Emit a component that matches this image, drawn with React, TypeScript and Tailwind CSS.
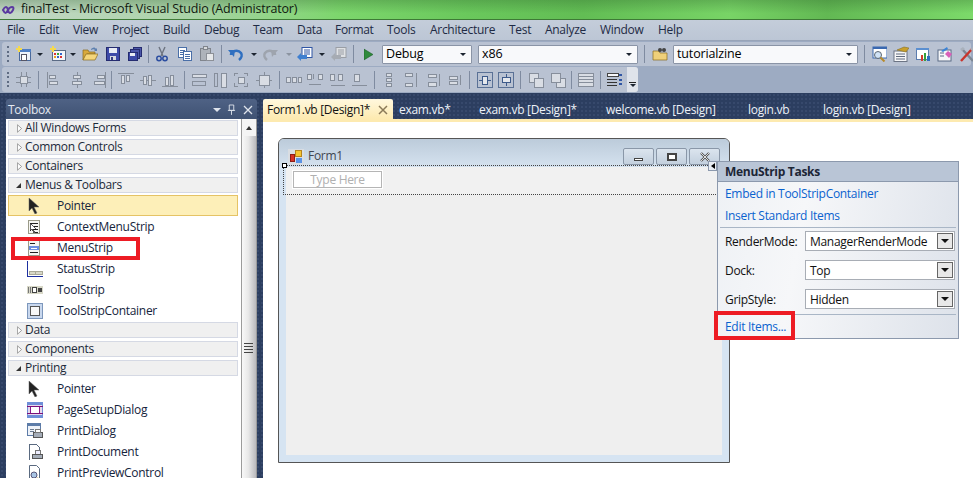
import type { ReactNode } from "react";

const menuItems = [
  { label: "File", width: "w-[32px]" },
  { label: "Edit", width: "w-[34px]" },
  { label: "View", width: "w-[39px]" },
  { label: "Project", width: "w-[51px]" },
  { label: "Build", width: "w-[41px]" },
  { label: "Debug", width: "w-[49px]" },
  { label: "Team", width: "w-[44px]" },
  { label: "Data", width: "w-[38px]" },
  { label: "Format", width: "w-[52px]" },
  { label: "Tools", width: "w-[43px]" },
  { label: "Architecture", width: "w-[79px]" },
  { label: "Test", width: "w-[36px]" },
  { label: "Analyze", width: "w-[55px]" },
  { label: "Window", width: "w-[58px]" },
  { label: "Help", width: "w-[40px]" },
];

const Svg = ({ children, className = "" }: { children: ReactNode; className?: string }) => (
  <svg viewBox="0 0 16 16" className={`h-4 w-4 shrink-0 ${className}`} shapeRendering="crispEdges">
    {children}
  </svg>
);

const Grip = () => (
  <div className="ml-[5px] flex h-[16px] w-[3px] shrink-0 flex-col justify-between">
    <span className="h-[2px] w-[2px] bg-[#5f6c82]" />
    <span className="h-[2px] w-[2px] bg-[#5f6c82]" />
    <span className="h-[2px] w-[2px] bg-[#5f6c82]" />
    <span className="h-[2px] w-[2px] bg-[#5f6c82]" />
  </div>
);

const Sep = ({ className = "" }: { className?: string }) => (
  <div className={`h-[18px] w-px shrink-0 bg-[#7f8ba0] ${className}`} />
);

const Caret = ({ className = "", gray = false }: { className?: string; gray?: boolean }) => (
  <span
    className={`h-0 w-0 shrink-0 border-x-[3px] border-t-[3px] border-x-transparent ${gray ? "border-t-[#8b93a0]" : "border-t-[#1c2430]"} ${className}`}
  />
);

const NewProject = ({ className = "" }: { className?: string }) => (
  <Svg className={className}>
    <rect x="3.500" y="3.500" width="11" height="11" fill="#eef3fb" stroke="#4a6a9c" />
    <rect x="3" y="3" width="12" height="3" fill="#4f7fc4" />
    <rect x="5.500" y="8.500" width="5" height="6" fill="#fff" stroke="#556" />
    <path d="M0 2h2V0h2v2h2v2H4v2H2V4H0z" fill="#f5d94e" />
  </Svg>
);

const AddItem = ({ className = "" }: { className?: string }) => (
  <Svg className={className}>
    <rect x="2.500" y="4.500" width="13" height="10" fill="#f4f6f9" stroke="#5b6b85" />
    <rect x="4" y="7" width="2" height="2" fill="#d33" />
    <rect x="7" y="7" width="2" height="2" fill="#3a3" />
    <rect x="10" y="7" width="2" height="2" fill="#36c" />
    <rect x="4" y="10" width="2" height="2" fill="#e9a21f" />
    <rect x="7" y="10" width="2" height="2" fill="#36c" />
    <rect x="10" y="10" width="2" height="2" fill="#d33" />
    <path d="M0 2h2V0h2v2h2v2H4v2H2V4H0z" fill="#f5d94e" />
  </Svg>
);

const OpenFolder = ({ className = "" }: { className?: string }) => (
  <svg viewBox="0 0 16 16" className={`h-4 w-4 shrink-0 ${className}`}>
    <path d="M1 14V4h5l1 2h6v2H5L1 14z" fill="#d8a93c" stroke="#8a6a1e" strokeWidth=".7" />
    <path d="M1 14l3-6h12l-3 6z" fill="#f5d67a" stroke="#8a6a1e" strokeWidth=".7" />
    <path d="M9 3c2-2 4-2 5 0l1-1v3h-3l1-1C12 3 11 3 9 4z" fill="#5c7fae" />
  </svg>
);

const Save = ({ className = "" }: { className?: string }) => (
  <Svg className={className}>
    <rect x="1.500" y="1.500" width="13" height="13" fill="#3d4aa8" stroke="#252c70" />
    <rect x="4" y="2" width="8" height="5" fill="#e8ecf4" />
    <rect x="5" y="10" width="6" height="4" fill="#d5d8e0" />
    <rect x="6" y="11" width="2" height="3" fill="#353c80" />
  </Svg>
);

const SaveAll = ({ className = "" }: { className?: string }) => (
  <Svg className={className}>
    <rect x="6.500" y="1.500" width="8" height="9" fill="#4a55a8" stroke="#252c70" />
    <rect x="3.500" y="3.500" width="9" height="9" fill="#4a55a8" stroke="#252c70" />
    <rect x="1.500" y="6.500" width="9" height="8" fill="#3d4aa8" stroke="#252c70" />
    <rect x="3" y="7" width="5" height="3" fill="#e8ecf4" />
  </Svg>
);

const Cut = ({ className = "" }: { className?: string }) => (
  <svg viewBox="0 0 16 16" className={`h-4 w-4 shrink-0 ${className}`}>
    <path d="M5 1l4 9M11 1L7 10" stroke="#6d7480" strokeWidth="1.400" fill="none" />
    <circle cx="5" cy="12.500" r="2.200" fill="none" stroke="#2b4da0" strokeWidth="1.500" />
    <circle cx="11" cy="12.500" r="2.200" fill="none" stroke="#2b4da0" strokeWidth="1.500" />
  </svg>
);

const Copy = ({ className = "" }: { className?: string }) => (
  <Svg className={className}>
    <rect x="1.500" y="1.500" width="8" height="10" fill="#fff" stroke="#4a6fa8" />
    <path d="M3 4h5M3 6h5M3 8h5" stroke="#4a6fa8" />
    <rect x="6.500" y="5.500" width="8" height="9" fill="#fff" stroke="#4a6fa8" />
    <path d="M8 8h5M8 10h5M8 12h5" stroke="#4a6fa8" />
  </Svg>
);

const Paste = ({ className = "" }: { className?: string }) => (
  <Svg className={className}>
    <rect x="1.500" y="2.500" width="10" height="12" fill="#aeb3ba" stroke="#80858d" />
    <rect x="4.500" y="0.500" width="4" height="3" fill="#d7d9dc" stroke="#80858d" />
    <rect x="7.500" y="7.500" width="7" height="7" fill="#e6e8ea" stroke="#8c9097" />
  </Svg>
);

const Undo = ({ className = "", gray = false, flip = false }: { className?: string; gray?: boolean; flip?: boolean }) => (
  <svg viewBox="0 0 16 16" className={`h-4 w-4 shrink-0 ${flip ? "-scale-x-100" : ""} ${className}`}>
    <path
      d="M3 9c0-4 7-6 10-2 1.500 2 .5 5-2 7"
      fill="none"
      stroke={gray ? "#9ea4ae" : "#2f6fc0"}
      strokeWidth="2.600"
    />
    <path d="M0 4l7 0-1 7z" fill={gray ? "#9ea4ae" : "#2f6fc0"} />
  </svg>
);

const Navigate = ({ className = "", gray = false }: { className?: string; gray?: boolean }) => (
  <svg viewBox="0 0 16 16" className={`h-4 w-4 shrink-0 ${className}`}>
    <rect x="5" y="1.500" width="10" height="10" fill={gray ? "#dfe1e4" : "#fff"} stroke={gray ? "#9a9ea5" : "#2f55a4"} />
    <path d="M7 4h6M7 6h6M7 8h6" stroke={gray ? "#9a9ea5" : "#2f55a4"} />
    <path d="M0 11l4-4v2h6v4H4v2z" fill={gray ? "#a6abb3" : "#3f7fd0"} />
  </svg>
);

const Play = ({ className = "" }: { className?: string }) => (
  <svg viewBox="0 0 10 12" className={`h-[13px] w-[9px] shrink-0 ${className}`}>
    <path d="M0 0l10 6-10 6z" fill="#2f8a3c" stroke="#1c5c28" strokeWidth=".6" />
  </svg>
);

const FindFolder = ({ className = "" }: { className?: string }) => (
  <svg viewBox="0 0 16 16" className={`h-4 w-4 shrink-0 ${className}`}>
    <path d="M1 14V5h6l1 2h7v7z" fill="#efd07a" stroke="#8a6a1e" strokeWidth=".7" />
    <circle cx="8" cy="4" r="2" fill="#444" />
    <circle cx="12" cy="4" r="2" fill="#444" />
  </svg>
);

const SolutionExplorer = ({ className = "" }: { className?: string }) => (
  <svg viewBox="0 0 16 16" className={`h-4 w-4 shrink-0 ${className}`}>
    <rect x="2" y="1" width="14" height="11" fill="#fff" stroke="#3a68b0" />
    <rect x="2" y="1" width="14" height="2" fill="#3a68b0" />
    <circle cx="7" cy="9" r="3.500" fill="#cfe2f6" stroke="#5d6873" />
    <path d="M9.500 11.500l4 4" stroke="#b88a2a" strokeWidth="2" />
  </svg>
);

const PropertiesIcon = ({ className = "" }: { className?: string }) => (
  <svg viewBox="0 0 16 16" className={`h-4 w-4 shrink-0 ${className}`}>
    <rect x="1" y="5" width="13" height="10.500" fill="#f5f6f8" stroke="#6c7484" />
    <path d="M3 8h9M3 10.500h9M3 13h9" stroke="#606a7c" />
    <path d="M4 4l7-3 5 1-3 4z" fill="#c9a02c" stroke="#7d6416" strokeWidth=".5" />
  </svg>
);

const ObjectBrowser = ({ className = "" }: { className?: string }) => (
  <Svg className={className}>
    <rect x="1.500" y="2.500" width="12" height="11" fill="#fff" stroke="#5b7cae" />
    <rect x="1" y="2" width="13" height="2" fill="#5b8fd0" />
    <rect x="6" y="9" width="2" height="6" fill="#d43b2c" />
    <rect x="9" y="7" width="2" height="8" fill="#37a03c" />
    <rect x="12" y="10" width="3" height="5" fill="#2f6fc0" />
  </Svg>
);

const Toolbox16 = ({ className = "" }: { className?: string }) => (
  <svg viewBox="0 0 16 16" className={`h-4 w-4 shrink-0 ${className}`}>
    <rect x="1" y="4" width="13" height="11" fill="#f5f6f8" stroke="#5b6b85" />
    <path d="M3 7h4M3 10h4" stroke="#5b6b85" />
    <path d="M8 8l3-3 4 3-3 4z" fill="#d85fb8" />
    <path d="M4 5l6-4 1 2-5 3z" fill="#3b83d6" />
  </svg>
);

const Tools = ({ className = "" }: { className?: string }) => (
  <svg viewBox="0 0 16 16" className={`h-4 w-4 shrink-0 ${className}`}>
    <path d="M14 15L3 3" stroke="#7d8794" strokeWidth="2.400" />
    <path d="M2 15L13 3" stroke="#c9342c" strokeWidth="2.400" />
    <path d="M1 3l3-2 2 2-3 2zM11 3l3-2 2 3-3 1z" fill="#a9b1bc" />
  </svg>
);

// gray layout glyph: a couple of boxes on a guide line, used all over the layout toolbar
const Layout = ({
  boxes,
  lines,
  className = "",
  stroke = "#868e9b",
}: {
  boxes: [number, number, number, number][];
  lines?: string;
  className?: string;
  stroke?: string;
}) => (
  <Svg className={className}>
    {lines && <path d={lines} stroke={stroke} fill="none" />}
    {boxes.map(([x, y, w, h]) => (
      <rect key={`${x}-${y}`} x={x + 0.5} y={y + 0.5} width={w} height={h} fill="#d9dde4" stroke={stroke} />
    ))}
  </Svg>
);

const ComboBox = ({ label, className }: { label: string; className: string }) => (
  <div
    className={`flex h-[19px] shrink-0 items-center justify-between rounded-[1px] border border-[#8a94a6] bg-[#f8f9fb] pr-[5px] pl-[3px] text-[12.5px] tracking-[-0.15px] text-black ${className}`}
  >
    <span>{label}</span>
    <Caret />
  </div>
);

const TopToolbar = () => (
  <div className="mx-[2px] flex h-[24px] items-center rounded-[3px] bg-[#b9c2d2]">
    <Grip />
    <NewProject className="ml-[6px]" />
    <Caret className="ml-[5px]" />
    <AddItem className="ml-[7px]" />
    <Caret className="ml-[4px]" />
    <OpenFolder className="ml-[6px]" />
    <Save className="ml-[7px]" />
    <SaveAll className="ml-[6px]" />
    <Sep className="ml-[5px]" />
    <Cut className="ml-[5px]" />
    <Copy className="ml-[7px]" />
    <Paste className="ml-[6px]" />
    <Sep className="ml-[6px]" />
    <Undo className="ml-[6px]" />
    <Caret className="ml-[7px]" />
    <Undo gray flip className="ml-[5px]" />
    <Caret gray className="ml-[8px]" />
    <Navigate className="ml-[5px]" />
    <Caret className="ml-[6px]" />
    <Navigate gray className="ml-[6px]" />
    <Sep className="ml-[6px]" />
    <Play className="ml-[10px]" />
    <ComboBox label="Debug" className="ml-[9px] w-[90px]" />
    <ComboBox label="x86" className="ml-[6px] w-[160px]" />
    <Sep className="ml-[6px]" />
    <FindFolder className="ml-[7px]" />
    <ComboBox label="tutorialzine" className="ml-[5px] w-[185px]" />
    <Sep className="ml-[6px]" />
    <SolutionExplorer className="ml-[6px]" />
    <PropertiesIcon className="ml-[6px]" />
    <ObjectBrowser className="ml-[6px]" />
    <Toolbox16 className="ml-[6px]" />
    <Tools className="ml-[6px]" />
  </div>
);

const LayoutToolbar = () => (
  <div className="mt-[1px] ml-[2px] flex h-[25px] w-[636px] items-center rounded-[3px] bg-[#b9c2d2]">
    <Grip />
    <Layout className="ml-[6px]" boxes={[[4, 4, 7, 7]]} lines="M0 5.500h15M0 10.500h15M5.500 0v15M10.500 0v15" />
    <Sep className="ml-[6px]" />
    <Layout className="ml-[7px]" boxes={[[3, 3, 6, 3], [3, 9, 8, 3]]} lines="M1.500 0v16" />
    <Layout className="ml-[7px]" boxes={[[4, 3, 7, 3], [3, 9, 9, 3]]} lines="M8.500 0v16" />
    <Layout className="ml-[6px]" boxes={[[6, 3, 7, 3], [3, 9, 10, 3]]} lines="M14.500 0v16" />
    <Sep className="ml-[4px]" />
    <Layout className="ml-[6px]" boxes={[[3, 3, 3, 8], [8, 3, 3, 6]]} lines="M0 1.500h16" />
    <Layout className="ml-[6px]" boxes={[[3, 4, 3, 8], [8, 3, 3, 10]]} lines="M0 8.500h16" />
    <Layout className="ml-[6px]" boxes={[[3, 5, 3, 8], [8, 3, 3, 10]]} lines="M0 14.500h16" />
    <Sep className="ml-[6px]" />
    <Layout className="ml-[6px]" boxes={[[1, 2, 14, 3]]} lines="M1.500 9.500h13v4h-13z" />
    <Layout className="ml-[5px]" boxes={[[9, 1, 5, 14]]} lines="M2.500 1.500h3v13h-3z" />
    <Layout className="ml-[5px]" boxes={[[5, 5, 6, 6]]} lines="M1.500 4V1.500H5M11 1.500h3.500V4M14.500 11v3.500H11M5 14.500H1.500V11" />
    <Layout className="ml-[7px]" boxes={[[3, 3, 10, 10]]} lines="M0 8.500h3M13 8.500h3M8.500 0v3M8.500 13v3" />
    <Sep className="ml-[7px]" />
    <Layout className="ml-[6px]" boxes={[[0, 5, 4, 5], [6, 5, 4, 5], [12, 5, 3, 5]]} />
    <Layout className="ml-[5px]" boxes={[[0, 2, 4, 5], [11, 2, 4, 5]]} lines="M2 12.500h12M6.500 2v5" />
    <Layout className="ml-[7px]" boxes={[[0, 2, 4, 6], [8, 2, 4, 6]]} lines="M1 13.500h14" />
    <Layout className="ml-[6px]" boxes={[[2, 2, 5, 7]]} lines="M0 13.500h15" />
    <Sep className="ml-[6px]" />
    <Layout className="ml-[6px]" boxes={[[5, 1, 5, 3], [5, 6, 5, 3], [5, 11, 5, 3]]} />
    <Layout className="ml-[6px]" boxes={[[2, 1, 7, 3], [2, 11, 7, 3]]} lines="M13.500 1v14" />
    <Layout className="ml-[7px]" boxes={[[2, 2, 8, 3], [2, 10, 8, 4]]} lines="M13.500 2v12" />
    <Layout className="ml-[5px]" boxes={[[2, 4, 8, 3], [2, 9, 8, 3]]} lines="M13.500 3v10" />
    <Sep className="ml-[6px]" />
    <div className="ml-[7px] flex h-4 w-4 shrink-0 items-center justify-center border border-[#5a7196]">
      <svg viewBox="0 0 14 14" className="h-[14px] w-[14px]" shapeRendering="crispEdges">
        <path d="M1 7.500h12" stroke="#3d5a8a" />
        <rect x="4.500" y="3.500" width="5" height="8" fill="#e4e7ec" stroke="#3d5a8a" />
      </svg>
    </div>
    <div className="ml-[5px] flex h-4 w-4 shrink-0 items-center justify-center border border-[#5a7196]">
      <svg viewBox="0 0 14 14" className="h-[14px] w-[14px]" shapeRendering="crispEdges">
        <path d="M7.500 1v12" stroke="#3d5a8a" />
        <rect x="3.500" y="4.500" width="8" height="5" fill="#e4e7ec" stroke="#3d5a8a" />
      </svg>
    </div>
    <Sep className="ml-[6px]" />
    <Layout className="ml-[7px]" boxes={[[1, 1, 9, 9], [6, 6, 9, 9]]} />
    <Layout className="ml-[6px]" boxes={[[6, 6, 9, 9], [1, 1, 9, 9]]} />
    <Sep className="ml-[5px]" />
    <Layout className="ml-[6px]" boxes={[[0, 1, 15, 3], [0, 4, 15, 3], [0, 7, 15, 3], [0, 10, 15, 4]]} />
    <Sep className="ml-[6px]" />
    <Svg className="ml-[6px]">
      <rect x="0.500" y="1.500" width="11" height="3" fill="#f5f6f8" stroke="#444" />
      <path d="M0 7.500h10M0 10.500h10M0 13.500h10" stroke="#333" />
      <path d="M12 2h3v2h-3zM12 7h3v2h-3zM12 11h3v2h-3z" fill="#2f55a4" />
    </Svg>
    <div className="ml-auto flex h-full w-[11px] flex-col items-center justify-end rounded-r-[3px] bg-[#dfe3ea] pb-[5px]">
      <span className="mb-px h-px w-[7px] bg-[#222]" />
      <Caret />
    </div>
  </div>
);

const Pointer = () => (
  <svg viewBox="1 0 16 16" className="h-4 w-4">
    <path d="M3 0v13l3-3 3 6 2-1-3-6h5z" fill="#222" stroke="#666" strokeWidth=".5" />
  </svg>
);

const ContextMenuIcon = () => (
  <Svg>
    <rect x="1.500" y="1.500" width="11" height="13" fill="#f6f6f2" stroke="#9a9a88" />
    <path d="M3 4h8M7 7h4M7 10h4M7 13h4" stroke="#222" />
    <path d="M3 4v8l2-2 2 4 1-1-2-3h3z" fill="#fff" stroke="#111" strokeWidth=".7" />
  </Svg>
);

const MenuStripIcon = () => (
  <Svg>
    <rect x="1.500" y="0.500" width="11" height="15" fill="#f6f6f2" stroke="#9a9a88" />
    <path d="M3 3.500h5M3 12.500h8" stroke="#222" />
    <rect x="2" y="6" width="10" height="4" fill="#6d8fe0" />
    <path d="M4 8.500h6" stroke="#fff" />
  </Svg>
);

const StatusStripIcon = () => (
  <Svg>
    <path d="M0.500 0v15.500H16" stroke="#1c2fa0" fill="none" />
    <rect x="2.500" y="10.500" width="6" height="3" fill="#d8d8c8" stroke="#a9a998" />
    <rect x="8.500" y="10.500" width="7" height="3" fill="#d8d8c8" stroke="#a9a998" />
  </Svg>
);

const ToolStripIcon = () => (
  <Svg>
    <rect x="0" y="4" width="16" height="8" fill="#d8d8c8" />
    <path d="M1.500 5v6M3.500 5v6" stroke="#777" />
    <rect x="5.500" y="5.500" width="4" height="5" fill="#fff" stroke="#444" />
    <rect x="11" y="6" width="4" height="4" fill="#444" />
  </Svg>
);

const ContainerIcon = () => (
  <Svg>
    <rect x="0.500" y="0.500" width="15" height="15" fill="#c9d8ee" stroke="#7d97bc" />
    <rect x="3.500" y="3.500" width="9" height="9" fill="#f8f8f8" stroke="#555" />
  </Svg>
);

const PageSetupIcon = () => (
  <Svg>
    <rect x="0" y="0" width="16" height="16" fill="#6f8fd8" />
    <rect x="1" y="3" width="14" height="10" fill="#e8d8ec" />
    <rect x="3.500" y="4.500" width="9" height="7" fill="#fff" stroke="#8a1a8a" />
    <path d="M0 4.500h16M0 11.500h16" stroke="#7a107a" />
  </Svg>
);

const PrintDialogIcon = () => (
  <Svg>
    <rect x="0.500" y="0.500" width="13" height="12" fill="#eef2f8" stroke="#5d7ca8" />
    <rect x="1" y="1" width="12" height="2" fill="#5d7ca8" />
    <path d="M3 6.500h4M3 8.500h4" stroke="#6a7a90" />
    <rect x="6.500" y="9.500" width="9" height="5" fill="#a5adb8" stroke="#555" />
    <rect x="8.500" y="6.500" width="5" height="3" fill="#fff" stroke="#777" />
  </Svg>
);

const PrintDocumentIcon = () => (
  <Svg>
    <path d="M2.500 15.500V0.500h7l3 3V8" fill="#fff" stroke="#5a6a80" />
    <rect x="5.500" y="10.500" width="10" height="4" fill="#a5adb8" stroke="#555" />
    <path d="M8.500 10V6.500h5V10" fill="#eef" stroke="#777" />
  </Svg>
);

const PreviewIcon = () => (
  <svg viewBox="0 0 16 16" className="h-4 w-4 shrink-0">
    <path d="M2.500 15.500V0.500h7l3 3v12z" fill="#fff" stroke="#5a6a80" />
    <circle cx="7" cy="10" r="3" fill="#a7c4e4" stroke="#557" />
    <path d="M10 13l3 3" stroke="#c9a02c" strokeWidth="2" />
  </svg>
);

const Category = ({ label, open = false }: { label: string; open?: boolean }) => (
  <div className="mb-[3px] flex h-[16px] items-center border border-[#d5d9e4] bg-[#f0f0f0] text-[#1c2a3a]">
    {open ? (
      <span className="mr-[4px] ml-[7px] h-0 w-0 border-b-[5px] border-l-[5px] border-b-[#333] border-l-transparent" />
    ) : (
      <svg viewBox="0 0 6 10" className="mr-[3px] ml-[8px] h-[9px] w-[5px]">
        <path d="M.5.5l5 4.500-5 4.500z" fill="#fff" stroke="#8d8d8d" />
      </svg>
    )}
    <span>{label}</span>
  </div>
);

const Tool = ({ label, icon, active = false }: { label: string; icon: ReactNode; active?: boolean }) => (
  <div
    className={`flex h-[21px] items-center text-[#15243c] ${active ? "bg-[#fdefb8] text-[#1a1208] shadow-[inset_0_0_0_1px_#e5c365]" : ""}`}
  >
    <div className="ml-[19px] flex w-[30px] shrink-0 items-center">{icon}</div>
    <span>{label}</span>
  </div>
);

const Toolbox = () => (
  <aside className="mt-[6px] flex w-[251px] shrink-0 flex-col overflow-hidden">
    <div className="flex h-[20px] shrink-0 items-center rounded-t-[3px] bg-[linear-gradient(#4f6285,#3f5273)] pt-px text-[#e4e9f2]">
      <span className="ml-[2px]">Toolbox</span>
      <span className="ml-auto h-0 w-0 border-x-[4px] border-t-[4px] border-x-transparent border-t-[#dfe4ec]" />
      <svg viewBox="0 0 10 12" className="ml-[6px] h-[11px] w-[9px]">
        <path d="M2.500 1h5v6h-5zM1 7h8M5 7v5" fill="none" stroke="#dfe4ec" />
      </svg>
      <svg viewBox="0 0 10 10" className="mr-[4px] ml-[7px] h-[10px] w-[10px]">
        <path d="M1 1l8 8M9 1l-8 8" stroke="#dfe4ec" strokeWidth="1.300" />
      </svg>
    </div>
    <div className="flex flex-1 bg-white">
      <div className="w-[235px] pt-px pr-[3px] pl-[2px]">
        <Category label="All Windows Forms" />
        <Category label="Common Controls" />
        <Category label="Containers" />
        <Category open label="Menus & Toolbars" />
        <div className="-mt-px mb-[1px]">
          <Tool active label="Pointer" icon={<Pointer />} />
          <Tool label="ContextMenuStrip" icon={<ContextMenuIcon />} />
          <Tool label="MenuStrip" icon={<MenuStripIcon />} />
          <Tool label="StatusStrip" icon={<StatusStripIcon />} />
          <Tool label="ToolStrip" icon={<ToolStripIcon />} />
          <Tool label="ToolStripContainer" icon={<ContainerIcon />} />
        </div>
        <Category label="Data" />
        <Category label="Components" />
        <Category open label="Printing" />
        <div className="-mt-px">
          <Tool label="Pointer" icon={<Pointer />} />
          <Tool label="PageSetupDialog" icon={<PageSetupIcon />} />
          <Tool label="PrintDialog" icon={<PrintDialogIcon />} />
          <Tool label="PrintDocument" icon={<PrintDocumentIcon />} />
          <Tool label="PrintPreviewControl" icon={<PreviewIcon />} />
        </div>
      </div>
      <div className="flex w-[16px] flex-col border-x border-[#9b9b9b] bg-[linear-gradient(90deg,#f8f8f8,#e8e8e8_45%,#b9b9bd)]">
        <div className="flex h-[17px] items-center justify-center bg-[#f4f4f4]">
          <span className="h-0 w-0 border-x-[3px] border-b-[4px] border-x-transparent border-b-[#333]" />
        </div>
        <div className="mt-[207px] ml-[2px] flex h-[10px] w-[9px] flex-col justify-between">
          <span className="h-px bg-[#444]" />
          <span className="h-px bg-[#444]" />
          <span className="h-px bg-[#444]" />
          <span className="h-px bg-[#444]" />
        </div>
      </div>
    </div>
  </aside>
);

const tabs = [
  { label: "exam.vb*", width: "w-[80px]" },
  { label: "exam.vb [Design]*", width: "w-[127px]" },
  { label: "welcome.vb [Design]", width: "w-[142px]" },
  { label: "login.vb", width: "w-[75px]" },
  { label: "login.vb [Design]", width: "w-[120px]" },
];

const TabStrip = () => (
  <div className="mt-[6px] flex h-[20px] text-[#eef2f8]">
    <div className="flex w-[130px] items-center rounded-t-[2px] bg-[linear-gradient(#fff8de,#fdeab0)] pt-[2px] pl-[4px] text-[#111]">
      <span className="whitespace-nowrap">Form1.vb [Design]*</span>
      <svg viewBox="0 0 10 10" className="mr-[5px] ml-auto h-[10px] w-[10px]">
        <path d="M1 1l8 8M9 1l-8 8" stroke="#8a7a58" strokeWidth="1.500" />
      </svg>
    </div>
    <div className="flex">
      {tabs.map((tab) => (
        <div key={tab.label} className={`flex items-center pt-[2px] pl-[6px] whitespace-nowrap ${tab.width}`}>
          {tab.label}
        </div>
      ))}
    </div>
  </div>
);

const CaptionButton = ({ children }: { children: ReactNode }) => (
  <div className="flex h-[17px] w-[31px] items-center justify-center rounded-[2px] border border-[#8a97a8] bg-[linear-gradient(#dbe4ee,#c3d0de)]">
    {children}
  </div>
);

const FormWindow = () => (
  <div className="flex h-[325px] w-[452px] flex-col overflow-hidden rounded-t-[6px] border border-[#555] bg-[#d6e4f2]">
    <div className="flex h-[28px] shrink-0 items-end bg-[linear-gradient(#bccbda,#d5e2ef)] pb-[2px]">
      <Svg className="ml-[9px]">
        <rect x="0" y="0" width="16" height="16" fill="#d9dde2" />
        <rect x="7.500" y="1.500" width="6" height="6" fill="#f5c431" stroke="#b5841c" />
        <rect x="2.500" y="5.500" width="4" height="7" fill="#d83226" stroke="#8e1d15" />
        <rect x="8" y="9" width="6" height="5" fill="#5b93e6" />
      </Svg>
      <span className="ml-[4px] text-[#3f4650]">Form1</span>
      <div className="mr-[9px] ml-auto flex gap-[2px]">
        <CaptionButton>
          <span className="mt-[5px] h-[3px] w-[9px] border border-[#444] bg-white" />
        </CaptionButton>
        <CaptionButton>
          <span className="h-[8px] w-[10px] border-2 border-[#444] bg-white" />
        </CaptionButton>
        <CaptionButton>
          <svg viewBox="0 0 12 10" className="h-[10px] w-[12px]">
            <path d="M2 1l8 8M10 1l-8 8" stroke="#555" strokeWidth="2.400" />
            <path d="M2 1l8 8M10 1l-8 8" stroke="#fff" strokeWidth=".8" />
          </svg>
        </CaptionButton>
      </div>
    </div>
    <div className="mx-[7px] mb-[7px] flex-1 bg-[#efefef]">
      <div className="h-[28px] bg-[#f1f1f1] pt-[4px] pl-[7px]">
        <div className="flex h-[17px] w-[89px] items-center justify-center border border-[#b5b5b5] bg-white text-[#b0b0b0] outline outline-1 outline-white">
          Type Here
        </div>
      </div>
    </div>
  </div>
);

const TaskSelect = ({ label, value, className }: { label: string; value: string; className: string }) => (
  <div className={`flex items-center text-[#111] ${className}`}>
    <span className="w-[87px] pt-px pl-[7px]">{label}</span>
    <div className="flex h-[20px] w-[150px] items-center justify-between border border-[#a8adb5] bg-white pr-px pl-[4px]">
      <span className="pt-px">{value}</span>
      <div className="flex h-[16px] w-[16px] items-center justify-center border border-[#666] bg-[#e8e8e8]">
        <span className="h-0 w-0 border-x-[4px] border-t-[4px] border-x-transparent border-t-[#111]" />
      </div>
    </div>
  </div>
);

const TasksPanel = () => (
  <div className="absolute top-[161px] left-[717px] flex h-[178px] w-[242px] flex-col border border-[#8c99ad] bg-[linear-gradient(100deg,#eef1f5,#f6f7f9_35%,#dde2ea)]">
    <div className="flex h-[20px] shrink-0 items-center border-b border-[#8c99ad] bg-[#b9c5d6] pl-[7px] font-bold text-[#1c2636]">
      MenuStrip Tasks
    </div>
    <div className="mt-[1px] flex h-[22px] shrink-0 items-center pl-[7px] text-[#0a62cf]">Embed in ToolStripContainer</div>
    <div className="flex h-[22px] shrink-0 items-center pl-[7px] text-[#0a62cf]">Insert Standard Items</div>
    <div className="mx-[2px] h-px shrink-0 bg-[#a9b6c6]" />
    <TaskSelect label="RenderMode:" value="ManagerRenderMode" className="mt-[3px]" />
    <TaskSelect label="Dock:" value="Top" className="mt-[9px]" />
    <TaskSelect label="GripStyle:" value="Hidden" className="mt-[9px]" />
    <div className="mx-[2px] mt-[5px] h-px shrink-0 bg-[#a9b6c6]" />
    <div className="flex flex-1 items-center pl-[7px] text-[#0a62cf]">Edit Items...</div>
  </div>
);

const App = () => (
  <div className="relative flex h-[478px] w-[973px] flex-col overflow-hidden bg-[#9dabc2] font-['Open_Sans','Noto_Sans',sans-serif] text-[12px] tracking-[-0.3px]">
    <div className="flex h-[20px] shrink-0 items-center border-b border-[#3e7a36] bg-[linear-gradient(rgba(40,90,40,.28),transparent_70%),linear-gradient(90deg,#c5d8c8,#a9d3a6_20%,#7cd66c_35%,#6ac85c_48%,#62bd54_60%,#78d466_75%,#62b853_85%,#7cda6a)] text-[12.5px] tracking-[-0.16px] text-[#10180f]">
      <svg viewBox="0 0 16 10" className="h-[10px] w-[16px]">
        <path d="M3 5c2-4 4-4 5 0s3 4 5 0-3-4-5 0-3 4-5 0z" fill="none" stroke="#5b3aa0" strokeWidth="2" />
      </svg>
      <span className="ml-[5px]">finalTest - Microsoft Visual Studio (Administrator)</span>
    </div>
    <div className="flex h-[21px] shrink-0 items-center border-b border-[#98a4b8] bg-[linear-gradient(#c4cdda,#bcc6d5)] pl-[7px] text-[#1e2a44]">
      {menuItems.map((item) => (
        <span key={item.label} className={item.width}>
          {item.label}
        </span>
      ))}
    </div>
    <div className="shrink-0 pt-px">
      <TopToolbar />
      <LayoutToolbar />
    </div>
    <div className="mt-[1px] flex flex-1 bg-[#2c3e60] bg-[radial-gradient(#37496c_1px,transparent_1px)] bg-[length:4px_4px] pl-[6px]">
      <Toolbox />
      <main className="ml-[6px] flex flex-1 flex-col">
        <TabStrip />
        <div className="h-[3px] shrink-0 bg-[#fdeab0]" />
        <div className="flex-1 bg-white pt-[16px] pl-[15px]">
          <FormWindow />
        </div>
      </main>
    </div>

    {/* selection frame of the menu strip in the designer */}
    <div className="absolute top-[165px] left-[283px] h-[30px] w-[437px] border-y border-l border-dotted border-[#444]" />
    <div className="absolute top-[163px] left-[282px] h-[5px] w-[5px] border border-black bg-white" />
    <div className="absolute top-[161px] left-[708px] flex h-[10px] w-[9px] items-center justify-center border border-[#8c99ad] bg-[#e9eef4]">
      <span className="h-0 w-0 border-y-[3px] border-r-[4px] border-y-transparent border-r-black" />
    </div>
    <TasksPanel />

    {/* annotations */}
    <div className="absolute top-[237px] left-[11px] h-[23px] w-[129px] border-[4px] border-[#ed1c24]" />
    <div className="absolute top-[311px] left-[714px] h-[29px] w-[81px] border-[4px] border-[#ed1c24]" />
  </div>
);

export default App;
